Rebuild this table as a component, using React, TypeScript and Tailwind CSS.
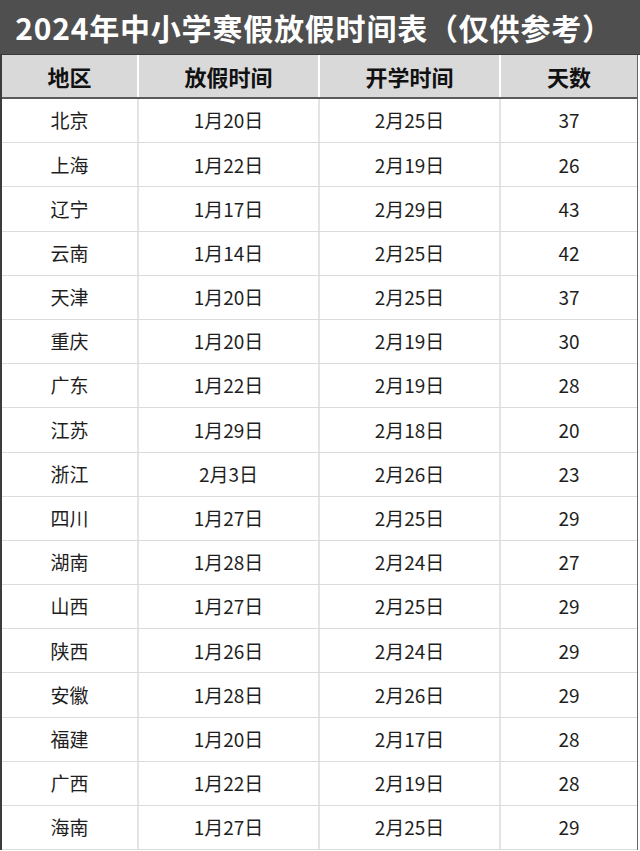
const rows = [
  ["北京", "1月20日", "2月25日", "37"],
  ["上海", "1月22日", "2月19日", "26"],
  ["辽宁", "1月17日", "2月29日", "43"],
  ["云南", "1月14日", "2月25日", "42"],
  ["天津", "1月20日", "2月25日", "37"],
  ["重庆", "1月20日", "2月19日", "30"],
  ["广东", "1月22日", "2月19日", "28"],
  ["江苏", "1月29日", "2月18日", "20"],
  ["浙江", "2月3日", "2月26日", "23"],
  ["四川", "1月27日", "2月25日", "29"],
  ["湖南", "1月28日", "2月24日", "27"],
  ["山西", "1月27日", "2月25日", "29"],
  ["陕西", "1月26日", "2月24日", "29"],
  ["安徽", "1月28日", "2月26日", "29"],
  ["福建", "1月20日", "2月17日", "28"],
  ["广西", "1月22日", "2月19日", "28"],
  ["海南", "1月27日", "2月25日", "29"],
]

const headers = ["地区", "放假时间", "开学时间", "天数"]

export default function App() {
  return (
    <div
      className="h-[851px] w-[640px] overflow-hidden bg-white"
      style={{ fontFamily: '"Noto Sans CJK SC", "Noto Sans", sans-serif' }}
    >
      {/* title bar */}
      <div className="flex h-[55px] items-center justify-center border-b border-[#3a3a3a] bg-[#4f4f4f] pr-[12px]">
        <h1 className="text-[30px] font-bold leading-none tracking-[0.8px] text-white">
          2024年中小学寒假放假时间表（仅供参考）
        </h1>
      </div>

      <div className="w-[638px] border-l-2 border-r border-l-[#3c3c3c] border-r-[#666]">
        {/* header */}
        <div className="grid h-[44px] grid-cols-[137px_181px_181px_1fr] border-b-2 border-[#5a5a5a] bg-[#d9d9d9]">
          {headers.map((h, i) => (
            <div
              key={h}
              className={`flex items-center justify-center text-[22px] font-bold text-[#111] ${
                i < 3 ? "border-r-2 border-white" : ""
              }`}
            >
              {h}
            </div>
          ))}
        </div>

        {/* body */}
        {rows.map((r) => (
          <div
            key={r[0]}
            className="grid h-[44.2px] grid-cols-[137px_181px_181px_1fr] border-b border-[#dcdcdc]"
          >
            {r.map((c, i) => (
              <div
                key={i}
                className={`flex items-center justify-center text-[19px] text-[#1e1e1e] ${
                  i < 3 ? "border-r-2 border-[#e4e4e4]" : ""
                }`}
              >
                {c}
              </div>
            ))}
          </div>
        ))}
      </div>
    </div>
  )
}
